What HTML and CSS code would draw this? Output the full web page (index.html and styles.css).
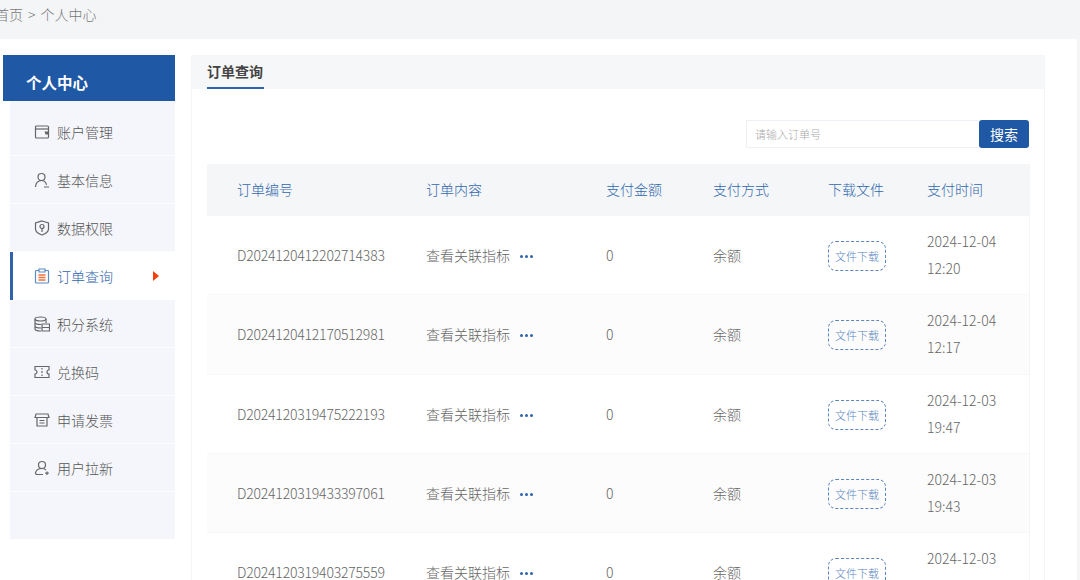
FILE: index.html
```html
<!DOCTYPE html>
<html lang="zh">
<head>
<meta charset="utf-8">
<title>订单查询</title>
<link rel="stylesheet" href="styles.css">
</head>
<body>
<div class="crumb"><span>首页</span><span class="sep">&gt;</span><span>个人中心</span></div>
<div class="page">
  <aside class="side">
    <h2 class="side-title">个人中心</h2>
    <ul class="menu">
      <li class="item"><svg class="ico" viewBox="0 0 16 16"><rect x="1.500" y="2" width="13" height="12" rx="1"/><path d="M1.500 5h13"/><path class="solid" d="M10.500 7.500h4v3h-3z"/></svg>账户管理</li>
      <li class="item"><svg class="ico" viewBox="0 0 16 16"><circle cx="7.500" cy="5" r="3.500"/><path d="M1.500 15c0-3.500 2.300-6.500 6-6.500 2.800 0 4.500 1.800 5 4.300M10 15h5"/></svg>基本信息</li>
      <li class="item"><svg class="ico" viewBox="0 0 16 16"><path d="M8 1l6.500 2v6c0 3-3.500 5-6.500 6-3-1-6.500-3-6.500-6V3z"/><circle cx="8" cy="6.500" r="2"/><path d="M8 8.500V12"/></svg>数据权限</li>
      <li class="item active"><svg class="ico blue" viewBox="0 0 16 16"><path d="M5 2.500H2.500a1 1 0 0 0-1 1V14a1 1 0 0 0 1 1h11a1 1 0 0 0 1-1V3.500a1 1 0 0 0-1-1H11M5 1h6v3H5z"/><path class="org" d="M4.500 7h7M4.500 9.500h7M4.500 12h7"/></svg>订单查询<span class="arrow"></span></li>
      <li class="item"><svg class="ico" viewBox="0 0 16 16"><ellipse cx="6.500" cy="3" rx="5.500" ry="2"/><path d="M1 3v10c0 1 2.500 2 6 2M1 6.500c0 1 2.500 2 6 2M1 10c0 1 2.500 2 6 2M12 3v4M8 8h7.500v7H8zM8 11.500h7.500"/></svg>积分系统</li>
      <li class="item"><svg class="ico" viewBox="0 0 16 16"><path d="M1 2.500h14V6a2 2 0 0 0 0 4v3.500H1V10a2 2 0 0 0 0-4zM8 4v1.500M8 7v2M8 10.500V12"/></svg>兑换码</li>
      <li class="item"><svg class="ico" viewBox="0 0 16 16"><path d="M2 2h12l1 3.500H1zM3 5.500V14h10V5.500M5.500 8.500h5M5.500 11h5"/></svg>申请发票</li>
      <li class="item"><svg class="ico" viewBox="0 0 16 16"><circle cx="8" cy="5" r="3.500"/><path d="M9 14.500H3a1.500 1.500 0 0 1-1.500-1.700C2 10.300 4.500 8.500 8 8.500c1.800 0 3 .5 4 1.500M13 11.500v3.500M11.200 13.200h3.600"/></svg>用户拉新</li>
    </ul>
  </aside>
  <main class="panel">
    <div class="tabs"><span class="tab">订单查询</span></div>
    <div class="body">
      <form class="search">
        <input class="input" type="text" placeholder="请输入订单号">
        <button class="btn" type="button">搜索</button>
      </form>
      <table class="orders">
        <colgroup><col class="c1"><col class="c2"><col class="c3"><col class="c4"><col class="c5"><col class="c6"></colgroup>
        <thead><tr><th>订单编号</th><th>订单内容</th><th>支付金额</th><th>支付方式</th><th>下载文件</th><th>支付时间</th></tr></thead>
        <tbody>
          <tr><td class="no">D2024120412202714383</td><td>查看关联指标<svg class="dots" viewBox="0 0 13 3"><circle cx="1.500" cy="1.500" r="1.500"/><circle cx="6.500" cy="1.500" r="1.500"/><circle cx="11.500" cy="1.500" r="1.500"/></svg></td><td>0</td><td>余额</td><td><span class="dl">文件下载</span></td><td class="time">2024-12-04<br>12:20</td></tr>
          <tr><td class="no">D2024120412170512981</td><td>查看关联指标<svg class="dots" viewBox="0 0 13 3"><circle cx="1.500" cy="1.500" r="1.500"/><circle cx="6.500" cy="1.500" r="1.500"/><circle cx="11.500" cy="1.500" r="1.500"/></svg></td><td>0</td><td>余额</td><td><span class="dl">文件下载</span></td><td class="time">2024-12-04<br>12:17</td></tr>
          <tr><td class="no">D2024120319475222193</td><td>查看关联指标<svg class="dots" viewBox="0 0 13 3"><circle cx="1.500" cy="1.500" r="1.500"/><circle cx="6.500" cy="1.500" r="1.500"/><circle cx="11.500" cy="1.500" r="1.500"/></svg></td><td>0</td><td>余额</td><td><span class="dl">文件下载</span></td><td class="time">2024-12-03<br>19:47</td></tr>
          <tr><td class="no">D2024120319433397061</td><td>查看关联指标<svg class="dots" viewBox="0 0 13 3"><circle cx="1.500" cy="1.500" r="1.500"/><circle cx="6.500" cy="1.500" r="1.500"/><circle cx="11.500" cy="1.500" r="1.500"/></svg></td><td>0</td><td>余额</td><td><span class="dl">文件下载</span></td><td class="time">2024-12-03<br>19:43</td></tr>
          <tr><td class="no">D2024120319403275559</td><td>查看关联指标<svg class="dots" viewBox="0 0 13 3"><circle cx="1.500" cy="1.500" r="1.500"/><circle cx="6.500" cy="1.500" r="1.500"/><circle cx="11.500" cy="1.500" r="1.500"/></svg></td><td>0</td><td>余额</td><td><span class="dl">文件下载</span></td><td class="time">2024-12-03<br>19:40</td></tr>
        </tbody>
      </table>
    </div>
  </main>
</div>
</body>
</html>
```
FILE: styles.css
```css
* { box-sizing: border-box; }
html, body { margin: 0; height: 100%; }
body {
  width: 1080px; height: 580px; overflow: hidden; background: #f4f5f7;
  font-family: "Noto Sans CJK SC", "Noto Sans", sans-serif; font-size: 14px; color: #666;
}
.crumb {
  height: 39px; margin-left: -5px; padding-top: 4px;
  display: flex; gap: 5px; line-height: 20px; font-weight: 300; color: #777;
}
.page { display: flex; align-items: flex-start; width: 1077px; height: 541px; padding: 16px 0 0 3px; background: #fff; }
.side { width: 172px; margin-right: 16px; }
.side-title {
  margin: 0; height: 46px; background: #1f58a5; color: #fff;
  font-size: 15.500px; font-weight: 700; line-height: 54px; padding-left: 23px;
}
.menu {
  list-style: none; margin: 0 0 0 7px; padding: 7px 0 0; background: #f4f6fb;
  height: 438px;
}
.item {
  height: 48px; display: flex; align-items: center; padding-left: 24px; gap: 7px;
  border-bottom: 1px solid #fbfcfe; font-weight: 300; color: #555; position: relative;
}
.item.active { background: #fff; color: #2f66ad; border-left: 3px solid #2f63ab; padding-left: 21px; border-bottom: 0; }
.ico { width: 16px; height: 16px; fill: none; stroke: #666; stroke-width: 1.200; flex: none; }
.ico .solid { fill: #666; stroke: none; }
.ico.blue { stroke: #5b8ac6; }
.ico .org { stroke: #f0703a; stroke-width: 1.500; }
.arrow {
  position: absolute; left: 140px; top: 19px; width: 0; height: 0;
  border-left: 6px solid #f53f0c; border-top: 5px solid transparent; border-bottom: 5px solid transparent;
}
.panel { width: 854px; height: 540px; border: 1px solid #f4f5f9; border-bottom: 0; }
.tabs { height: 33px; background: #f6f7f9; padding-left: 15px; }
.tab {
  display: inline-block; height: 33px; width: 57px; line-height: 31px; border-bottom: 2px solid #2f63ab;
  font-weight: 700; color: #444; white-space: nowrap;
}
.body { padding: 31px 15px 0; }
.search { display: flex; justify-content: flex-end; height: 28px; margin: 0 0 16px; }
.input {
  width: 233px; height: 28px; border: 1px solid #eff0f6; border-right: 0; padding: 0 8px; outline: 0;
  font: 300 11px "Noto Sans CJK SC", sans-serif; color: #666; background: #fff;
}
.input::placeholder { color: #aaa; }
.btn {
  width: 50px; height: 28px; border: 0; border-radius: 3px; background: #1f58a5; color: #fff; padding: 0;
  font: 400 14px "Noto Sans CJK SC", sans-serif;
}
.orders { width: 822px; table-layout: fixed; border-collapse: separate; border-spacing: 0; border-right: 1px solid #f5f5f8; }
.c1 { width: 189px; } .c2 { width: 180px; } .c3 { width: 107px; }
.c4 { width: 115px; } .c5 { width: 99px; } .c6 { width: 132px; }
.orders th {
  height: 52px; background: #f5f6f8; text-align: left; font-weight: 300; color: #2f66ad; padding: 0 0 2px 30px;
}
.orders td { height: 79.250px; padding: 0 0 0 30px; font-weight: 300; color: #666; vertical-align: middle; border-bottom: 1px solid #f8f8f8; }
.orders tbody tr:nth-child(even) { background: #fcfcfc; }
.no { letter-spacing: -.2px; white-space: nowrap; }
.dots { width: 13px; height: 3px; fill: #2f63ab; margin-left: 10px; vertical-align: 3px; }
.dl {
  display: inline-block; width: 58px; height: 30px; line-height: 28px; text-align: center; font-size: 11px;
  border: 1px dashed #5b86bf; border-radius: 8px; color: #5b86bf; vertical-align: middle; margin-top: 2px;
}
.time { line-height: 27px; }
```
